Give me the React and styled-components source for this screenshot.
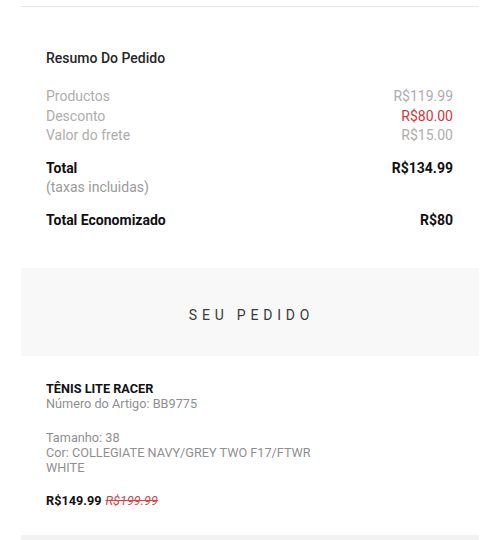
import React from 'react';
import styled, { createGlobalStyle } from 'styled-components';

const GlobalStyle = createGlobalStyle`
  body {
    margin: 0;
    background: #fff;
    font-family: Roboto, "Liberation Sans", sans-serif;
    color: #222;
  }
`;

const Page = styled.div`
  width: 500px;
  height: 540px;
  overflow: hidden;
  padding: 0 21px;
  box-sizing: border-box;
`;

const TopRule = styled.div`
  height: 1px;
  margin-top: 6px;
  background: #e8e8e8;
`;

const Summary = styled.section`
  padding: 41px 26px 0 25px;
  height: 261px;
  box-sizing: border-box;
`;

const SummaryTitle = styled.h2`
  margin: 0 0 19px;
  font-size: 14px;
  font-weight: 500;
  line-height: 20px;
  color: #262626;
`;

const Line = styled.div`
  display: flex;
  justify-content: space-between;
  font-size: 14px;
  line-height: 19.5px;
  color: ${({ $strong }) => ($strong ? '#111' : '#adadad')};
  font-weight: ${({ $strong }) => ($strong ? 700 : 400)};
  margin-top: ${({ $gap }) => $gap || 0}px;
`;

const Amount = styled.span`
  color: ${({ $red }) => ($red ? '#c8393b' : 'inherit')};
`;

const Note = styled.div`
  font-size: 14px;
  line-height: 19.5px;
  color: #9a9a9a;
`;

const OrderBanner = styled.div`
  height: 88px;
  background: #f8f8f8;
  display: flex;
  align-items: center;
  justify-content: center;
  font-size: 14px;
  letter-spacing: 4.8px;
  color: #3a3a3a;
  padding: 6px 0 0 3px;
  box-sizing: border-box;
`;

const Item = styled.article`
  padding: 25px 25px 0;
  height: 179px;
  box-sizing: border-box;
`;

const ItemName = styled.div`
  font-size: 12.7px;
  font-weight: 700;
  line-height: 15px;
  color: #111;
`;

const ItemMeta = styled.div`
  font-size: 12.7px;
  line-height: 15px;
  color: #8f8f8f;
  max-width: 275px;
  margin-top: ${({ $gap }) => $gap || 0}px;
`;

const PriceRow = styled.div`
  margin-top: 18px;
  font-size: 12.7px;
  line-height: 15px;
  display: flex;
  gap: 4px;
`;

const Price = styled.span`
  font-weight: 700;
  color: #111;
`;

const OldPrice = styled.span`
  font-style: italic;
  color: #d0474a;
  text-decoration: line-through;
`;

const BottomBand = styled.div`
  height: 8px;
  background: #f2f2f2;
`;

export default function App() {
  return (
    <Page>
      <GlobalStyle />
      <TopRule />
      <Summary>
        <SummaryTitle>Resumo Do Pedido</SummaryTitle>
        <Line>
          <span>Productos</span>
          <Amount>R$119.99</Amount>
        </Line>
        <Line>
          <span>Desconto</span>
          <Amount $red>R$80.00</Amount>
        </Line>
        <Line>
          <span>Valor do frete</span>
          <Amount>R$15.00</Amount>
        </Line>
        <Line $strong $gap={13}>
          <span>Total</span>
          <Amount>R$134.99</Amount>
        </Line>
        <Note>(taxas incluidas)</Note>
        <Line $strong $gap={13}>
          <span>Total Economizado</span>
          <Amount>R$80</Amount>
        </Line>
      </Summary>
      <OrderBanner>SEU PEDIDO</OrderBanner>
      <Item>
        <ItemName>TÊNIS LITE RACER</ItemName>
        <ItemMeta>Número do Artigo: BB9775</ItemMeta>
        <ItemMeta $gap={19}>Tamanho: 38</ItemMeta>
        <ItemMeta>Cor: COLLEGIATE NAVY/GREY TWO F17/FTWR WHITE</ItemMeta>
        <PriceRow>
          <Price>R$149.99</Price>
          <OldPrice>R$199.99</OldPrice>
        </PriceRow>
      </Item>
      <BottomBand />
    </Page>
  );
}
